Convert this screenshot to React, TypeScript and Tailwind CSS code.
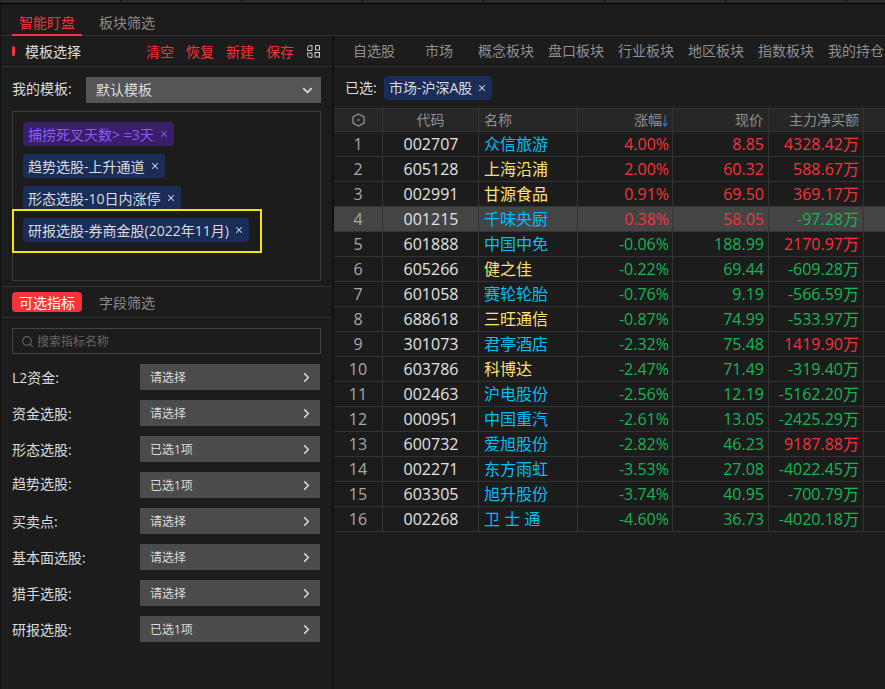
import { ChevronDown, ChevronRight, Search, X } from "lucide-react";

const red = "text-[#f5333b]";
const green = "text-[#14b553]";

const stocks = [
  ["1", "002707", "众信旅游", "c", "4.00%", "8.85", "4328.42万"],
  ["2", "605128", "上海沿浦", "y", "2.00%", "60.32", "588.67万"],
  ["3", "002991", "甘源食品", "y", "0.91%", "69.50", "369.17万"],
  ["4", "001215", "千味央厨", "c", "0.38%", "58.05", "-97.28万"],
  ["5", "601888", "中国中免", "c", "-0.06%", "188.99", "2170.97万"],
  ["6", "605266", "健之佳", "y", "-0.22%", "69.44", "-609.28万"],
  ["7", "601058", "赛轮轮胎", "c", "-0.76%", "9.19", "-566.59万"],
  ["8", "688618", "三旺通信", "y", "-0.87%", "74.99", "-533.97万"],
  ["9", "301073", "君亭酒店", "c", "-2.32%", "75.48", "1419.90万"],
  ["10", "603786", "科博达", "y", "-2.47%", "71.49", "-319.40万"],
  ["11", "002463", "沪电股份", "c", "-2.56%", "12.19", "-5162.20万"],
  ["12", "000951", "中国重汽", "c", "-2.61%", "13.05", "-2425.29万"],
  ["13", "600732", "爱旭股份", "c", "-2.82%", "46.23", "9187.88万"],
  ["14", "002271", "东方雨虹", "c", "-3.53%", "27.08", "-4022.45万"],
  ["15", "603305", "旭升股份", "c", "-3.74%", "40.95", "-700.79万"],
  ["16", "002268", "卫 士 通", "c", "-4.60%", "36.73", "-4020.18万"],
];

const filters = [
  ["L2资金:", "请选择"],
  ["资金选股:", "请选择"],
  ["形态选股:", "已选1项"],
  ["趋势选股:", "已选1项"],
  ["买卖点:", "请选择"],
  ["基本面选股:", "请选择"],
  ["猎手选股:", "请选择"],
  ["研报选股:", "已选1项"],
];

const sign = (v: string) => (v.startsWith("-") ? green : red);

function Tag({ text, purple }: { text: string; purple?: boolean }) {
  return (
    <div
      className={
        purple
          ? "flex h-6 w-fit items-center gap-[5px] rounded-sm bg-[#3a1d6b] px-[5px] text-[#8b5cf0]"
          : "flex h-6 w-fit items-center gap-[5px] rounded-sm bg-[#1a2d58] px-[5px] text-[#dcdcdc]"
      }
    >
      <span className="mt-[1px] whitespace-nowrap">{text}</span>
      <X size={10} strokeWidth={2.5} />
    </div>
  );
}

function LeftPanel() {
  return (
    <div className="w-[331px] shrink-0 text-sm">
      <div className="flex h-[31px] items-center border-b border-[#333] pl-[11px] pr-3">
        <div className="h-[10px] w-[3px] rounded-sm bg-[#f5333b]" />
        <span className="ml-[10px] mt-[2px] text-[#dcdcdc]">模板选择</span>
        <div className="ml-auto mt-[2px] flex gap-3 text-[#f5333b]">
          <span>清空</span>
          <span>恢复</span>
          <span>新建</span>
          <span>保存</span>
        </div>
        <svg className="ml-[13px]" width="13" height="13" viewBox="0 0 13 13" fill="none" stroke="#d5d5d5" strokeWidth="1">
          <path d="M5 .5H3.500a3 3 0 0 0-3 3V5.500H5Z" />
          <path d="M8.500 .5h3.500a.5.500 0 0 1 .5.500V5H8.500Z" />
          <path d="M.5 8H5v4.500H3.500a3 3 0 0 1-3-3Z" />
          <rect x="8" y="7.500" width="4.500" height="4.500" />
        </svg>
      </div>

      <div className="mt-[10px] flex items-center pl-[11px]">
        <span className="mb-[2px] w-[74px] text-[#dcdcdc]">我的模板:</span>
        <div className="flex h-[26px] w-[235px] items-center justify-between bg-[#555] pl-[10px] pr-[6px] text-[#dcdcdc]">
          默认模板
          <ChevronDown size={15} strokeWidth={2.5} />
        </div>
      </div>

      <div className="relative ml-[11px] mt-2 flex h-[170px] w-[309px] flex-col gap-2 border border-[#3a3a3a] pl-[10px] pt-[10px]">
        <Tag purple text="捕捞死叉天数> =3天" />
        <Tag text="趋势选股-上升通道" />
        <Tag text="形态选股-10日内涨停" />
        <Tag text="研报选股-券商金股(2022年11月)" />
        <div className="absolute left-[-1px] top-[97px] h-[44px] w-[250px] border-2 border-[#f5e500]" />
      </div>

      <div className="mt-[5px] flex h-[32px] items-start border-y border-[#333] pl-[11px] pt-[5px]">
        <div className="flex h-5 w-[70px] items-center justify-center rounded-sm bg-[#f5333b] pt-[2px] text-white">可选指标</div>
        <span className="ml-[17px] mt-[1px] text-[#8a8a8a]">字段筛选</span>
      </div>

      <div className="ml-[11px] mt-[10px] flex h-[26px] w-[309px] items-center border border-[#444] pl-2 text-xs text-[#666]">
        <Search size={13} className="mr-[3px]" />
        <span className="mt-[1px]">搜索指标名称</span>
      </div>

      <div className="mt-[10px] flex flex-col gap-[10px] pl-[11px]">
        {filters.map(([label, value]) => (
          <div key={label} className="flex h-[26px] items-center">
            <span className={`w-[128px] text-[#dcdcdc] ${label === "趋势选股:" ? "mb-[2px]" : "mt-[2px]"}`}>{label}</span>
            <div className="flex h-[26px] w-[180px] items-center justify-between bg-[#4b4b4b] pl-[10px] pr-[6px] text-xs text-[#dcdcdc]">
              <span className="mt-[1px]">{value}</span>
              <ChevronRight size={15} strokeWidth={2.5} />
            </div>
          </div>
        ))}
      </div>
    </div>
  );
}

const tabs = ["概念板块", "盘口板块", "行业板块", "地区板块", "指数板块", "我的持仓"];
const cols = "grid grid-cols-[49px_96px_99px_95px_96px_95px_1fr]";
const cell = "flex items-center border-r border-[#333]";

function RightPanel() {
  return (
    <div className="min-w-0 flex-1 overflow-hidden text-sm">
      <div className="flex h-[31px] items-center whitespace-nowrap border-b border-[#333] pl-[19px] text-[#8f8f8f]">
        <span>自选股</span>
        <span className="ml-[30px] mr-[25px]">市场</span>
        <div className="flex gap-[14px]">
          {tabs.map((t) => (
            <span key={t}>{t}</span>
          ))}
        </div>
      </div>
      <div className="flex h-[41px] items-center pl-[11px] text-[#dcdcdc]">
        <span className="w-[39px]">已选:</span>
        <Tag text="市场-沪深A股" />
      </div>
      <div className={`${cols} h-[24px] border-b border-t border-[#333] bg-[#272727] text-[#8f8f8f]`}>
        <div className={`${cell} justify-center`}>
          <svg width="13" height="14" viewBox="0 0 13 14" fill="none" stroke="#8f8f8f" strokeWidth="1.3">
            <path d="M6.500 1 12 4v6l-5.500 3L1 10V4Z" />
            <circle cx="6.500" cy="7" r="1" fill="#8f8f8f" stroke="none" />
          </svg>
        </div>
        <div className={`${cell} justify-center`}>代码</div>
        <div className={`${cell} pl-[5px]`}>名称</div>
        <div className={`${cell} justify-end pr-[4px]`}>
          涨幅
          <svg width="6" height="13" viewBox="0 0 6 13" fill="none" stroke="#2f6fe0" strokeWidth="1.2">
            <path d="M3 1v11M.8 9.500 3 12l2.200-2.500" />
          </svg>
        </div>
        <div className={`${cell} justify-end pr-[5px]`}>现价</div>
        <div className={`${cell} justify-end pr-[4px]`}>主力净买额</div>
        <div />
      </div>
      {stocks.map(([no, code, name, kind, chg, price, flow]) => (
        <div
          key={no}
          className={`${cols} h-[25px] border-b border-[#333] text-base ${no === "4" ? "bg-[#444]" : ""}`}
        >
          <div className={`${cell} justify-center text-[#a8a8a8]`}>{no}</div>
          <div className={`${cell} justify-center pl-[1px] text-[#e2e2e2]`}>{code}</div>
          <div className={`${cell} whitespace-pre pl-[5px] ${kind === "c" ? "text-[#00bff5]" : "text-[#ffe06b]"}`}>{name}</div>
          <div className={`${cell} justify-end pr-[3px] ${sign(chg)}`}>{chg}</div>
          <div className={`${cell} justify-end pr-[4px] ${sign(chg)}`}>{price}</div>
          <div className={`${cell} justify-end pr-[4px] ${sign(flow)}`}>{flow}</div>
          <div />
        </div>
      ))}
    </div>
  );
}

export default function App() {
  return (
    <div className="h-[689px] w-[885px] overflow-hidden bg-[#1c1c1c] font-['Open_Sans','Noto_Sans_CJK_SC',sans-serif]">
      <div className="flex h-[4px] border-b border-black bg-[#2a2a2a]">
        {[0, 1, 2, 3, 4, 5, 6].map((i) => (
          <div key={i} className="h-full w-[121px] shrink-0 border-r border-[#111]" />
        ))}
      </div>
      <div className="flex h-[32px] border-b border-l border-[#333] border-l-[#111] pt-[6px] text-sm">
        <div className="relative ml-[11px] flex w-[70px] items-center justify-center text-[#f5333b]">
          智能盯盘
          <div className="absolute bottom-[-1px] left-0 h-[2px] w-full bg-[#f5333b]" />
        </div>
        <div className="ml-[17px] flex items-center text-[#8a8a8a]">板块筛选</div>
      </div>
      <div className="flex h-[653px] border-l border-[#111]">
        <LeftPanel />
        <div className="w-[2px] shrink-0 bg-[#111]" />
        <RightPanel />
      </div>
    </div>
  );
}
